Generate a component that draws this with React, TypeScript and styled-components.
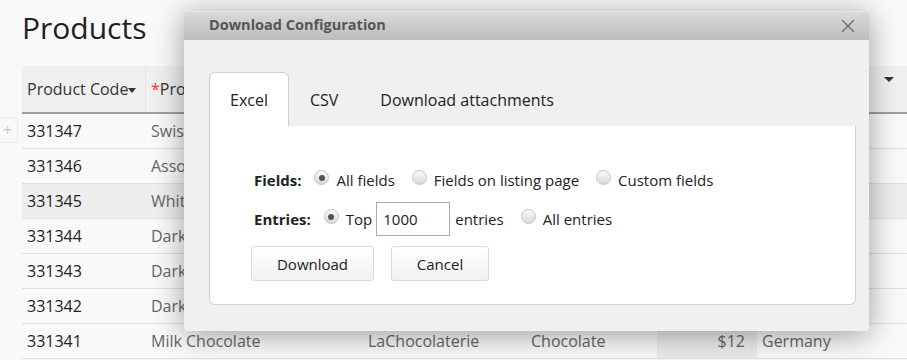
import React from "react";
import styled, { createGlobalStyle } from "styled-components";

const GlobalStyle = createGlobalStyle`
  html, body {
    margin: 0;
    padding: 0;
    background: #f9f9f9;
    font-family: "Open Sans", "Liberation Sans", sans-serif;
  }
  * {
    box-sizing: border-box;
  }
`;

const columns = [
  { title: "Product Code", width: 124, sort: true },
  { title: "Product Name", width: 217, required: true },
  { title: "Supplier", width: 163 },
  { title: "Category", width: 131 },
  { title: "Price", width: 100, right: true, shaded: true },
  { title: "Country", width: 160, menu: true },
];

const rows = [
  ["331347", "Swiss Milk Chocolate", "Lindt", "Chocolate", "$14", "Switzerland"],
  ["331346", "Assorted Truffles", "Godiva", "Chocolate", "$22", "Belgium"],
  ["331345", "White Chocolate Bar", "Milka", "Chocolate", "$9", "Germany"],
  ["331344", "Dark Chocolate 70%", "Lindt", "Chocolate", "$11", "Switzerland"],
  ["331343", "Dark Chocolate 85%", "Lindt", "Chocolate", "$12", "Switzerland"],
  ["331342", "Dark Orange", "Ritter", "Chocolate", "$10", "Germany"],
  ["331341", "Milk Chocolate", "LaChocolaterie", "Chocolate", "$12", "Germany"],
];

export default function App() {
  return (
    <Page>
      <GlobalStyle />
      <Title>Products</Title>
      <Table>
        <HeaderRow>
          {columns.map((c, i) => (
            <HeaderCell key={i} $width={c.width} $last={i === columns.length - 1}>
              {c.required && <Required>*</Required>}
              {c.title}
              {c.sort && <SortArrow />}
              {c.menu && <MenuArrow />}
            </HeaderCell>
          ))}
        </HeaderRow>
        {rows.map((r, ri) => (
          <Row key={ri} $active={ri === 2}>
            {ri === 0 && <AddButton>+</AddButton>}
            {r.map((v, ci) => (
              <Cell
                key={ci}
                $width={columns[ci].width}
                $right={columns[ci].right}
                $shaded={columns[ci].shaded}
                $main={ci === 0}
              >
                {v}
              </Cell>
            ))}
          </Row>
        ))}
      </Table>

      <Dialog>
        <DialogHeader>
          <DialogTitle>Download Configuration</DialogTitle>
          <CloseButton>
            <svg width="14" height="14" viewBox="0 0 14 14">
              <path d="M1 1 L13 13 M13 1 L1 13" stroke="#6b6b6b" strokeWidth="1.3" fill="none" />
            </svg>
          </CloseButton>
        </DialogHeader>
        <DialogBody>
          <Tabs>
            <Tab $active>Excel</Tab>
            <Tab>CSV</Tab>
            <Tab>Download attachments</Tab>
          </Tabs>
          <Panel>
            <FormRow>
              <Label>Fields:</Label>
              <Option>
                <Radio $checked />
                All fields
              </Option>
              <Option>
                <Radio />
                Fields on listing page
              </Option>
              <Option>
                <Radio />
                Custom fields
              </Option>
            </FormRow>
            <FormRow>
              <Label>Entries:</Label>
              <Option>
                <Radio $checked />
                Top
                <NumberInput defaultValue="1000" />
                entries
              </Option>
              <Option>
                <Radio />
                All entries
              </Option>
            </FormRow>
            <ButtonRow>
              <Button $width={123}>Download</Button>
              <Button $width={98}>Cancel</Button>
            </ButtonRow>
          </Panel>
        </DialogBody>
      </Dialog>
    </Page>
  );
}

const Page = styled.div`
  position: relative;
  width: 907px;
  height: 360px;
  overflow: hidden;
  padding-left: 22px;
  background: #f9f9f9;
`;

const Title = styled.h1`
  margin: 0;
  padding-top: 8px;
  height: 66px;
  font-size: 30px;
  font-weight: 400;
  line-height: 40px;
  color: #222;
`;

const Table = styled.div`
  display: flex;
  flex-direction: column;
  width: 920px;
`;

const HeaderRow = styled.div`
  display: flex;
  height: 48px;
  background: #f0f0f0;
  border-bottom: 2px solid #9e9e9e;
`;

const HeaderCell = styled.div<{ $width: number; $last?: boolean }>`
  position: relative;
  display: flex;
  align-items: center;
  width: ${(p) => p.$width}px;
  padding-left: 5px;
  border-right: ${(p) => (p.$last ? "none" : "1px solid #e2e2e2")};
  font-size: 16px;
  color: #333;
  white-space: nowrap;
`;

const Required = styled.span`
  color: #e53935;
`;

const SortArrow = styled.span`
  display: inline-block;
  width: 0;
  height: 0;
  margin-top: 2px;
  border-left: 4px solid transparent;
  border-right: 4px solid transparent;
  border-top: 5px solid #333;
`;

const MenuArrow = styled.span`
  position: absolute;
  left: 127px;
  top: 11px;
  width: 0;
  height: 0;
  border-left: 5px solid transparent;
  border-right: 5px solid transparent;
  border-top: 5px solid #333;
`;

const Row = styled.div<{ $active?: boolean }>`
  position: relative;
  display: flex;
  height: 35px;
  background: ${(p) => (p.$active ? "#eeeeee" : "#f9f9f9")};
  border-bottom: 1px solid #e0e0e0;
`;

const AddButton = styled.div`
  position: absolute;
  left: -24px;
  top: 3px;
  width: 20px;
  height: 26px;
  display: flex;
  align-items: center;
  justify-content: center;
  border: 1px solid #ececec;
  border-left: none;
  border-radius: 0 4px 4px 0;
  color: #c8c8c8;
  font-size: 16px;
`;

const Cell = styled.div<{ $width: number; $right?: boolean; $shaded?: boolean; $main?: boolean }>`
  display: flex;
  align-items: center;
  justify-content: ${(p) => (p.$right ? "flex-end" : "flex-start")};
  width: ${(p) => p.$width}px;
  padding: ${(p) => (p.$right ? "0 12px 0 0" : "0 0 0 5px")};
  background: ${(p) => (p.$shaded ? "rgba(0,0,0,0.05)" : "transparent")};
  font-size: 16px;
  color: ${(p) => (p.$main ? "#222" : "#666")};
  white-space: nowrap;
  overflow: hidden;
`;

const Dialog = styled.div`
  position: absolute;
  left: 184px;
  top: 11px;
  width: 685px;
  height: 320px;
  display: flex;
  flex-direction: column;
  border-radius: 4px;
  background: #f0f0f0;
  box-shadow: 0 4px 30px rgba(0, 0, 0, 0.38);
  overflow: hidden;
`;

const DialogHeader = styled.div`
  display: flex;
  align-items: center;
  justify-content: space-between;
  height: 29px;
  padding: 0 14px 0 25px;
  background: linear-gradient(#dadada, #bcbcbc);
  border-top: 1px solid #e6e6e6;
`;

const DialogTitle = styled.div`
  font-size: 14.5px;
  font-weight: 700;
  color: #555;
  margin-top: -4px;
`;

const CloseButton = styled.div`
  display: flex;
  align-items: center;
`;

const DialogBody = styled.div`
  display: flex;
  flex-direction: column;
  padding: 32px 13px 0 25px;
`;

const Tabs = styled.div`
  display: flex;
  height: 54px;
`;

const Tab = styled.div<{ $active?: boolean }>`
  display: flex;
  align-items: center;
  padding: 0 20px;
  font-size: 16px;
  color: #222;
  background: ${(p) => (p.$active ? "#fff" : "transparent")};
  border: 1px solid ${(p) => (p.$active ? "#d0d0d0" : "transparent")};
  border-bottom: none;
  border-radius: 6px 6px 0 0;
`;

const Panel = styled.div`
  display: flex;
  flex-direction: column;
  height: 179px;
  padding: 34px 0 0 44px;
  background: #fff;
  border: 1px solid #d0d0d0;
  border-top: none;
  border-radius: 0 0 6px 6px;
`;

const FormRow = styled.div`
  display: flex;
  align-items: center;
  height: 39px;
  gap: 17px;
`;

const Label = styled.div`
  font-size: 15px;
  font-weight: 700;
  color: #222;
  margin-right: -4px;
`;

const Option = styled.div`
  display: flex;
  align-items: center;
  gap: 7px;
  font-size: 15px;
  color: #222;
`;

const Radio = styled.span<{ $checked?: boolean }>`
  position: relative;
  display: inline-block;
  width: 15px;
  height: 15px;
  margin-top: -4px;
  border-radius: 50%;
  border: 1px solid #c4c4c4;
  background: linear-gradient(#fafafa, #d9d9d9);
  &::after {
    content: "";
    display: ${(p) => (p.$checked ? "block" : "none")};
    position: absolute;
    left: 3.5px;
    top: 3.5px;
    width: 6px;
    height: 6px;
    border-radius: 50%;
    background: #555;
  }
`;

const NumberInput = styled.input`
  width: 74px;
  height: 34px;
  margin: 0 -2px 0 -3px;
  padding: 0 6px;
  border: 1px solid #aaa;
  font-family: inherit;
  font-size: 15px;
  color: #222;
  outline: none;
`;

const ButtonRow = styled.div`
  display: flex;
  gap: 17px;
  margin: 8px 0 0 -3px;
`;

const Button = styled.div<{ $width: number }>`
  display: flex;
  align-items: center;
  justify-content: center;
  width: ${(p) => p.$width}px;
  height: 35px;
  border: 1px solid #dadada;
  border-radius: 3px;
  background: linear-gradient(#ffffff, #f1f1f1);
  font-size: 15px;
  color: #222;
`;
